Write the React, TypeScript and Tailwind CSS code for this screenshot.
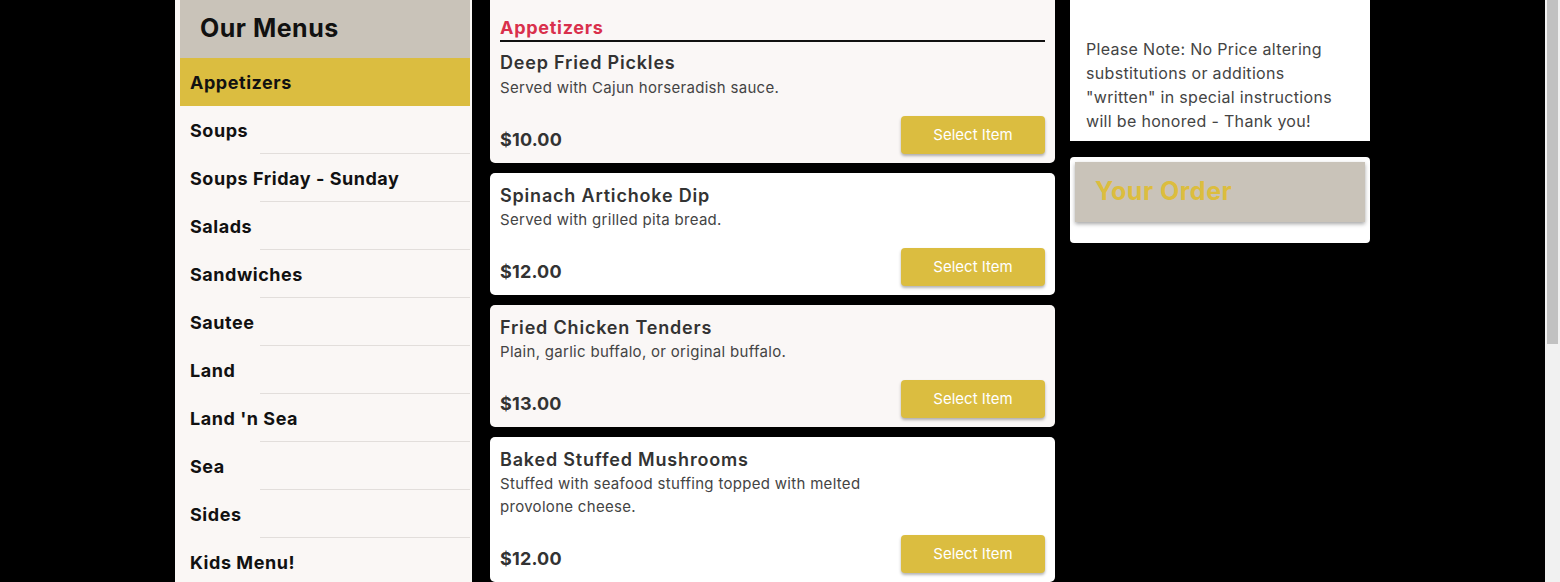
const CATEGORIES = [
  "Appetizers",
  "Soups",
  "Soups Friday - Sunday",
  "Salads",
  "Sandwiches",
  "Sautee",
  "Land",
  "Land 'n Sea",
  "Sea",
  "Sides",
  "Kids Menu!",
  "Desserts",
];

type Item = { name: string; desc: string; price: string };

const ITEMS: Item[] = [
  { name: "Deep Fried Pickles", desc: "Served with Cajun horseradish sauce.", price: "$10.00" },
  { name: "Spinach Artichoke Dip", desc: "Served with grilled pita bread.", price: "$12.00" },
  { name: "Fried Chicken Tenders", desc: "Plain, garlic buffalo, or original buffalo.", price: "$13.00" },
  {
    name: "Baked Stuffed Mushrooms",
    desc: "Stuffed with seafood stuffing topped with melted provolone cheese.",
    price: "$12.00",
  },
];

const FONT = "font-['Inter','Noto_Sans',sans-serif]";

function Sidebar() {
  return (
    <aside className="w-[297px] shrink-0 self-start bg-[#faf7f5] pl-[5px] pr-[2px]">
      <div className="h-[58px] flex items-center pl-5 bg-[#c9c3b9]">
        <h2 className="text-[25px] font-bold text-[#111] tracking-[0.02em]">Our Menus</h2>
      </div>
      {CATEGORIES.map((c, i) => (
        <div
          key={c}
          className={`relative h-[48px] flex items-center px-[10px] text-[18px] font-bold text-[#111] tracking-[0.03em] ${
            i === 0
              ? "bg-[#dbbd40]"
              : "bg-[#faf7f5] after:absolute after:bottom-0 after:left-[80px] after:right-0 after:h-px after:bg-[#e2dedb]"
          }`}
        >
          {c}
        </div>
      ))}
    </aside>
  );
}

function ItemCard({ item, idx }: { item: Item; idx: number }) {
  const first = idx === 0;
  return (
    <div
      className={`px-[10px] pb-[9px] ${idx % 2 === 0 ? "bg-[#faf7f6]" : "bg-white"} ${
        first ? "rounded-b-[5px] pt-[16px]" : "rounded-[5px] pt-[11px]"
      }`}
    >
      {first && (
        <div>
          <h3 className="text-[18px] font-bold text-[#d9304c] leading-[24px] tracking-[0.04em]">Appetizers</h3>
          <div className="h-[2px] bg-[#111]" />
        </div>
      )}
      <div className={`text-[18px] font-semibold text-[#333] leading-[24px] tracking-[0.045em] ${first ? "mt-[9px]" : ""}`}>
        {item.name}
      </div>
      <p className={`max-w-[400px] text-[15px] text-[#444] leading-[23px] tracking-[0.02em] ${first ? "mt-[1px]" : ""}`}>
        {item.desc}
      </p>
      <div className="flex items-end justify-between mt-[17px]">
        <span className="pb-[1px] text-[18px] leading-[26px] font-bold text-[#333] tracking-[0.01em]">{item.price}</span>
        <button className="w-[144px] h-[38px] rounded-[4px] bg-[#dbbd40] text-white text-[15px] shadow-[0_2px_3px_rgba(0,0,0,0.3)]">
          Select Item
        </button>
      </div>
    </div>
  );
}

function Scrollbar() {
  return (
    <div className="fixed inset-y-0 right-0 w-[15px] bg-[#f1f1f1]">
      <div className="mx-[2px] h-[344px] bg-[#c1c1c1]" />
    </div>
  );
}

export default function App() {
  return (
    <div className={`min-h-[985px] bg-black pr-[15px] ${FONT}`}>
      <div className="mx-auto w-[1195px] flex gap-[18px]">
        <Sidebar />
        <main className="w-[565px] shrink-0 flex flex-col gap-[10px]">
          {ITEMS.map((it, i) => (
            <ItemCard key={it.name} item={it} idx={i} />
          ))}
        </main>
        <div className="ml-[-3px] w-[300px] shrink-0 flex flex-col gap-4">
          <div className="bg-white pt-[37px] pb-2 px-4">
            <p className="text-[16px] leading-[24px] text-[#444] tracking-[0.02em]">
              Please Note: No Price altering substitutions or additions "written" in special instructions will be
              honored - Thank you!
            </p>
          </div>
          <div className="bg-white rounded-[4px] p-[5px] pb-[21px]">
            <div className="h-[60px] flex items-center pl-5 bg-[#c9c3b9] shadow-[0_2px_4px_rgba(0,0,0,0.35)]">
              <h2 className="text-[25px] font-bold text-[#dcbd3e] tracking-[0.02em]">Your Order</h2>
            </div>
          </div>
        </div>
      </div>
      <Scrollbar />
    </div>
  );
}
